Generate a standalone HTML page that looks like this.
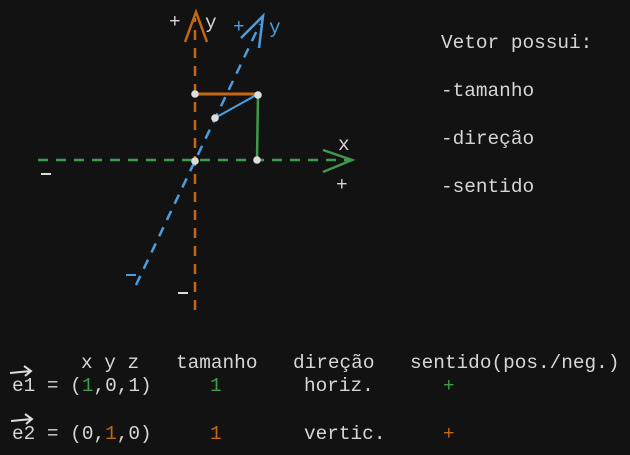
<!DOCTYPE html>
<html><head><meta charset="utf-8"><style>
html,body{margin:0;padding:0;background:#121212;width:630px;height:455px;overflow:hidden}
svg{display:block}
text{font-family:"Liberation Mono",monospace;font-size:19.4px;fill:#d6d6d6}
</style></head><body>
<svg width="630" height="455" viewBox="0 0 630 455">
<g stroke-width="2.5" fill="none" stroke-linecap="butt">
<line x1="38" y1="160" x2="350" y2="160" stroke="#3f9a4c" stroke-dasharray="10 8"/>
<polyline points="323,150 352,160 323,172" stroke="#3f9a4c"/>
<line x1="195" y1="310" x2="195" y2="18" stroke="#c4680f" stroke-dasharray="10 8"/>
<polyline points="185,42 196,12 207,42" stroke="#c4680f"/>
<line x1="136" y1="285" x2="260" y2="24" stroke="#4a9ee0" stroke-dasharray="10 8"/>
<polyline points="241,38 263,16 259,48" stroke="#4a9ee0"/>
<line x1="195" y1="94" x2="258" y2="94" stroke="#c4680f" stroke-width="3"/>
<line x1="258" y1="94" x2="257" y2="160" stroke="#3f9a4c"/>
<line x1="215" y1="118" x2="258" y2="94" stroke="#4a9ee0" stroke-width="2"/>
<line x1="41" y1="174" x2="51" y2="174" stroke="#ddd" stroke-width="2"/>
<line x1="126" y1="275" x2="136" y2="275" stroke="#4a9ee0" stroke-width="2"/>
<line x1="178" y1="293" x2="188" y2="293" stroke="#ddd" stroke-width="2"/>
<path d="M10 373 L31 371 M24 366 L31 371 L25 376" stroke="#ddd" stroke-width="2"/>
<path d="M11 421 L32 419 M25 414 L32 419 L26 424" stroke="#ddd" stroke-width="2"/>
</g>
<g fill="#ddd">
<circle cx="195" cy="94" r="3.8"/><circle cx="258" cy="95" r="3.8"/>
<circle cx="215" cy="118" r="3.8"/><circle cx="195" cy="161" r="3.8"/>
<circle cx="257" cy="160" r="3.8"/>
</g>
<text x="169" y="27">+</text><text x="205" y="28">y</text>
<text x="233" y="32" style="fill:#4a9ee0">+</text><text x="269" y="33" style="fill:#4a9ee0">y</text>
<text x="338" y="150">x</text><text x="336" y="190">+</text>
<text x="441" y="48">Vetor possui:</text>
<text x="441" y="96">-tamanho</text>
<text x="441" y="144">-direção</text>
<text x="441" y="192">-sentido</text>
<text x="81" y="368">x y z</text>
<text x="176" y="368">tamanho</text>
<text x="293" y="368">direção</text>
<text x="410" y="368">sentido(pos./neg.)</text>
<text x="12" y="391">e1 = (<tspan style="fill:#3f9a4c">1</tspan>,0,1)</text>
<text x="210" y="391" style="fill:#3f9a4c">1</text>
<text x="304" y="391">horiz.</text>
<text x="443" y="391" style="fill:#3f9a4c">+</text>
<text x="12" y="439">e2 = (0,<tspan style="fill:#c4680f">1</tspan>,0)</text>
<text x="210" y="439" style="fill:#c4680f">1</text>
<text x="304" y="439">vertic.</text>
<text x="443" y="439" style="fill:#c4680f">+</text>
</svg>
</body></html>
